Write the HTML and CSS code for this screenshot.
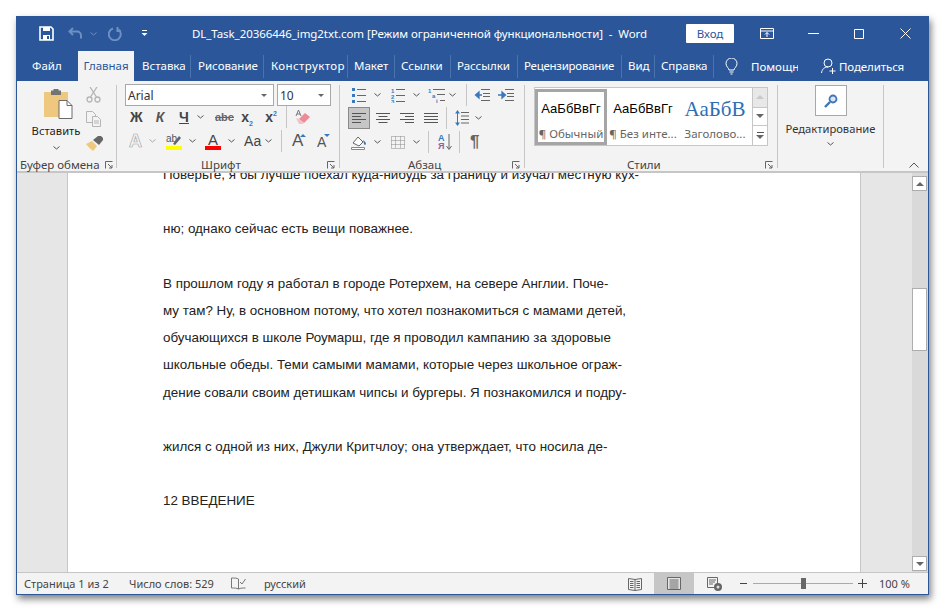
FILE: index.html
```html
<!DOCTYPE html>
<html lang="ru">
<head>
<meta charset="utf-8">
<title>Word</title>
<link rel="stylesheet" href="styles.css">
</head>
<body>
<div class="window">
  <header class="titlebar">
    <svg class="t-save" width="15" height="15" viewBox="0 0 15 15"><path d="M1 1h11l2 2v11H1z" fill="none" stroke="#fff" stroke-width="1.6"/><path d="M4 1h7v4H4zM4 9h7v5H4z" fill="#fff"/><path d="M8 10h2v3H8z" fill="#2b579a"/></svg>
    <svg class="t-undo" width="15" height="13" viewBox="0 0 15 13"><path d="M5 1 1.5 4.5 5 8M2 4.5h7a4 4 0 0 1 4 4v3" fill="none" stroke="#6d8fc1" stroke-width="2"/></svg>
    <svg class="t-caret" width="7" height="4" viewBox="0 0 7 4"><path d="M.5.500 3.500 3l3-2.500" fill="none" stroke="#6d8fc1"/></svg>
    <svg class="t-redo" width="14" height="14" viewBox="0 0 14 14"><path d="M5 1.500a6 6 0 1 0 5.500 1M9.500 0v4H13" fill="none" stroke="#6d8fc1" stroke-width="2"/></svg>
    <svg class="t-qat" width="7" height="7" viewBox="0 0 7 7"><path d="M1 .5h5" stroke="#fff"/><path d="M.5 3h6L3.500 6z" fill="#fff"/></svg>
    <div class="doc-title">DL_Task_20366446_img2txt.com [Режим ограниченной функциональности]&nbsp; -&nbsp; Word</div>
    <div class="signin">Вход</div>
    <svg class="t-ribbon" width="14" height="11" viewBox="0 0 14 11"><path d="M.5.500h13v10H.5zM.5 3h13M7 9V4.500M5 6.500l2-2 2 2" fill="none" stroke="#fff"/></svg>
    <svg class="t-min" width="11" height="1" viewBox="0 0 11 1"><path d="M0 .5h11" stroke="#fff"/></svg>
    <svg class="t-max" width="10" height="10" viewBox="0 0 10 10"><path d="M.5.500h9v9h-9z" fill="none" stroke="#fff"/></svg>
    <svg class="t-close" width="11" height="11" viewBox="0 0 11 11"><path d="M.5.500l10 10M10.500.500l-10 10" stroke="#fff"/></svg>
  </header>

  <nav class="tabs">
    <div class="tab file">Файл</div>
    <div class="tab active">Главная</div>
    <div class="tab tw-ins">Вставка</div><i class="tsep"></i>
    <div class="tab tw-draw">Рисование</div><i class="tsep"></i>
    <div class="tab tw-design">Конструктор</div><i class="tsep"></i>
    <div class="tab tw-layout">Макет</div><i class="tsep"></i>
    <div class="tab tw-refs">Ссылки</div><i class="tsep"></i>
    <div class="tab tw-mail">Рассылки</div><i class="tsep"></i>
    <div class="tab tw-review">Рецензирование</div><i class="tsep"></i>
    <div class="tab tw-view">Вид</div><i class="tsep"></i>
    <div class="tab tw-help">Справка</div><i class="tsep"></i>
    <svg class="bulb" width="13" height="17" viewBox="0 0 13 17"><path d="M4 12c0-2-3-3-3-6.500a5.500 5.500 0 0 1 11 0C12 9 9 10 9 12zM4.500 14h4M5.500 16h2" fill="none" stroke="#fff"/></svg>
    <div class="help">Помощн</div>
    <svg class="person" width="16" height="17" viewBox="0 0 16 17"><circle cx="7" cy="5" r="4" fill="none" stroke="#fff"/><path d="M.5 15c.5-4 3-6 6.500-6M11.500 10v6M8.500 13h6" fill="none" stroke="#fff"/></svg>
    <div class="share">Поделиться</div>
  </nav>

  <section class="ribbon">
    <div class="group g-clip">
      <div class="clip-body">
        <div class="paste">
          <svg width="29" height="30" viewBox="0 0 29 30"><path d="M0 3h24v25H0z" fill="#edc87e"/><path d="M7 1.500h10V6H7z" fill="#737373"/><path d="M9.500 0h5v3h-5z" fill="#737373"/><path d="M15 11.500h8l5 5v13H15z" fill="#fff" stroke="#6b6b6b"/><path d="M23 11.500v5h5" fill="none" stroke="#6b6b6b"/></svg>
          <span class="paste-label">Вставить</span>
          <svg class="chev" width="7" height="4" viewBox="0 0 7 4"><path d="M.5.500 3.500 3l3-2.500" fill="none" stroke="#555"/></svg>
        </div>
        <div class="clip-tools">
          <svg width="15" height="16" viewBox="0 0 15 16"><g fill="none" stroke="#b5b5b5" stroke-width="1.300"><circle cx="3.500" cy="12.500" r="2.500"/><circle cx="11.500" cy="12.500" r="2.500"/><path d="M4.500 10 11 0M10.500 10 4 0"/></g></svg>
          <svg width="16" height="16" viewBox="0 0 16 16"><g fill="#f3f3f3" stroke="#b5b5b5"><path d="M.5.500h6l3 3v8h-9z"/><path d="M6.500 5.500h5l3 3v7h-8z"/><path d="M8 10h5M8 12h5" /></g></svg>
          <svg width="17" height="15" viewBox="0 0 17 15"><path d="M0 8l6-3 5 5-4 5c-2-2-5-4-7-7z" fill="#edc87e"/><path d="M7 4l5-4h3l2 2v2l-4 5z" fill="#666"/></svg>
        </div>
      </div>
      <div class="glabel clip-label"><span>Буфер обмена</span>
        <svg class="launch" width="8" height="8" viewBox="0 0 8 8"><path d="M.5 7.500V.5h7M3 3l4 4M7 4v3H4" fill="none" stroke="#666"/></svg></div>
    </div>

    <div class="group g-font">
      <div class="row r1">
        <div class="combo font-name"><span>Arial</span><b class="drop"></b></div>
        <div class="combo font-size"><span>10</span><b class="drop"></b></div>
      </div>
      <div class="row r2">
        <span class="fmt f-zh">Ж</span>
        <span class="fmt f-k">К</span>
        <span class="fmt f-ch">Ч</span>
        <svg class="chev ml8" width="7" height="4" viewBox="0 0 7 4"><path d="M.5.500 3.500 3l3-2.500" fill="none" stroke="#555"/></svg>
        <span class="fmt f-abc">abc</span>
        <span class="fmt f-sub">x<sub>2</sub></span>
        <span class="fmt f-sup">x<sup>2</sup></span>
        <i class="vsep s-a"></i>
        <svg class="ml8" width="15" height="15" viewBox="0 0 15 15"><path d="M4 9l6-6 5 4-6 6z" fill="#ec8a95"/><path d="M1 8l3 1 5 4-2 1H4z" fill="#f3c0c5"/><path d="M1 6 3.500 0 6 6M2 4h3" fill="none" stroke="#777"/></svg>
      </div>
      <div class="row r3">
        <span class="fmt f-a-out">A</span>
        <svg class="chev c-149" width="7" height="4" viewBox="0 0 7 4"><path d="M.5.500 3.500 3l3-2.500" fill="none" stroke="#aaa"/></svg>
        <svg class="i-high" width="16" height="17" viewBox="0 0 16 17"><text x="0" y="9" font-size="10" font-family="Liberation Sans" fill="#555">ab</text><path d="M7 11l6-8 2 2-6 7z" fill="#666"/><path d="M0 13h16v4H0z" fill="#ffff00"/></svg>
        <svg class="chev ml7" width="7" height="4" viewBox="0 0 7 4"><path d="M.5.500 3.500 3l3-2.500" fill="none" stroke="#555"/></svg>
        <span class="fcol">A</span>
        <svg class="chev c-228" width="7" height="4" viewBox="0 0 7 4"><path d="M.5.500 3.500 3l3-2.500" fill="none" stroke="#555"/></svg>
        <span class="fmt f-aa">Аа</span>
        <svg class="chev ml6" width="7" height="4" viewBox="0 0 7 4"><path d="M.5.500 3.500 3l3-2.500" fill="none" stroke="#555"/></svg>
        <i class="vsep s-b"></i>
        <span class="grow g1">A<b class="tri up"></b></span>
        <span class="grow g2">A<b class="tri down"></b></span>
      </div>
      <div class="glabel"><span class="center-label font-lbl">Шрифт</span>
        <svg class="launch" width="8" height="8" viewBox="0 0 8 8"><path d="M.5 7.500V.5h7M3 3l4 4M7 4v3H4" fill="none" stroke="#666"/></svg></div>
    </div>

    <div class="group g-para">
      <div class="row r1 pr1">
        <svg class="ml4" width="14" height="15" viewBox="0 0 14 15"><path d="M0 0h3v3H0zM0 6h3v3H0zM0 12h3v3H0z" fill="#3a78bd"/><path d="M5 1.500h9M5 7.500h9M5 13.500h9" stroke="#666"/></svg>
        <svg class="chev m8-7" width="7" height="4" viewBox="0 0 7 4"><path d="M.5.500 3.500 3l3-2.500" fill="none" stroke="#555"/></svg>
        <svg class="m10" width="14" height="15" viewBox="0 0 14 15"><g fill="#3a78bd" font-size="6" font-family="Liberation Sans" font-weight="700"><text x="0" y="5">1</text><text x="0" y="10.500">2</text><text x="0" y="15.500">3</text></g><path d="M5 1.500h9M5 7.500h9M5 13.500h9" stroke="#666"/></svg>
        <svg class="chev m8-7" width="7" height="4" viewBox="0 0 7 4"><path d="M.5.500 3.500 3l3-2.500" fill="none" stroke="#555"/></svg>
        <svg class="m8" width="17" height="15" viewBox="0 0 17 15"><g fill="#3a78bd" font-size="6" font-family="Liberation Sans" font-weight="700"><text x="0" y="5">1</text><text x="4" y="10">a</text><text x="8" y="15">i</text></g><path d="M5 1.500h12M9 6.500h8M12 12.500h5" stroke="#666"/></svg>
        <svg class="chev m4" width="7" height="4" viewBox="0 0 7 4"><path d="M.5.500 3.500 3l3-2.500" fill="none" stroke="#555"/></svg>
        <i class="vsep s-c"></i>
        <svg class="m7" width="16" height="12" viewBox="0 0 16 12"><path d="M7 .5h9M9 4.500h7M9 7.500h7M7 11.500h9" stroke="#666"/><path d="M8 6H3M5 3 1.500 6 5 9z" fill="#3a78bd" stroke="#3a78bd" stroke-width="1.300"/></svg>
        <svg class="m8" width="16" height="12" viewBox="0 0 16 12"><path d="M7 .5h9M9 4.500h7M9 7.500h7M7 11.500h9" stroke="#666"/><path d="M0 6h5M4 3 7.500 6 4 9z" fill="#3a78bd" stroke="#3a78bd" stroke-width="1.300"/></svg>
      </div>
      <div class="row pr2">
        <span class="align-on"><svg width="14" height="10" viewBox="0 0 14 10"><path d="M0 .5h14M0 3.500h9M0 6.500h14M0 9.500h9" stroke="#555"/></svg></span>
        <svg class="m6" width="14" height="10" viewBox="0 0 14 10"><path d="M0 .5h14M2.500 3.500h9M0 6.500h14M2.500 9.500h9" stroke="#555"/></svg>
        <svg class="m10" width="14" height="10" viewBox="0 0 14 10"><path d="M0 .5h14M5 3.500h9M0 6.500h14M5 9.500h9" stroke="#555"/></svg>
        <svg class="m10" width="14" height="10" viewBox="0 0 14 10"><path d="M0 .5h14M0 3.500h14M0 6.500h14M0 9.500h14" stroke="#555"/></svg>
        <i class="vsep s-d"></i>
        <svg class="m8" width="14" height="16" viewBox="0 0 14 16"><path d="M2.500 1v14" stroke="#3a78bd"/><path d="M2.500 0 5 3.500H0zM2.500 16 5 12.500H0z" fill="#3a78bd"/><path d="M6 2.500h8M6 6h8M6 9.500h8M6 13h8" stroke="#666"/></svg>
        <svg class="chev m6" width="7" height="4" viewBox="0 0 7 4"><path d="M.5.500 3.500 3l3-2.500" fill="none" stroke="#555"/></svg>
      </div>
      <div class="row r3 pr3">
        <svg class="m3" width="16" height="16" viewBox="0 0 16 16"><path d="M2 9l5-6 5 5-4 4z" fill="#fff" stroke="#666"/><path d="M12 6c2 1 3 3 3 4s-2 1-2 0z" fill="#3a78bd"/><path d="M.5 13.500h13v2H.5z" fill="#fff" stroke="#888"/></svg>
        <svg class="chev m7" width="7" height="4" viewBox="0 0 7 4"><path d="M.5.500 3.500 3l3-2.500" fill="none" stroke="#555"/></svg>
        <svg class="m10" width="14" height="13" viewBox="0 0 14 13"><path d="M.5.500h13v12H.5zM.5 4.500h13M.5 8.500h13M4.500.5v12M9.500.5v12" fill="none" stroke="#888" stroke-dasharray="1 1"/></svg>
        <svg class="chev m8-7" width="7" height="4" viewBox="0 0 7 4"><path d="M.5.500 3.500 3l3-2.500" fill="none" stroke="#555"/></svg>
        <i class="vsep s-e"></i>
        <span class="sort m9"><span class="sort-a">А</span><span class="sort-z">Я</span><svg width="6" height="16" viewBox="0 0 6 16"><path d="M3 0v15M.5 12 3 15.500 5.500 12" fill="none" stroke="#666"/></svg></span>
        <i class="vsep s-f"></i>
        <span class="pil">¶</span>
      </div>
      <div class="glabel"><span class="center-label para-lbl">Абзац</span>
        <svg class="launch" width="8" height="8" viewBox="0 0 8 8"><path d="M.5 7.500V.5h7M3 3l4 4M7 4v3H4" fill="none" stroke="#666"/></svg></div>
    </div>

    <div class="group g-styles">
      <div class="gallery">
        <div class="style sel"><span class="s-prev">АаБбВвГг</span><span class="s-name">¶ Обычный</span></div>
        <div class="style"><span class="s-prev">АаБбВвГг</span><span class="s-name">¶ Без инте...</span></div>
        <div class="style"><span class="s-prev big">АаБбВ</span><span class="s-name">Заголово...</span></div>
        <div class="g-scroll">
          <div class="gs off"><b class="arr-up"></b></div>
          <div class="gs"><b class="arr-dn"></b></div>
          <div class="gs more"><b class="arr-dn"></b></div>
        </div>
      </div>
      <div class="glabel"><span class="center-label styles-lbl">Стили</span>
        <svg class="launch" width="8" height="8" viewBox="0 0 8 8"><path d="M.5 7.500V.5h7M3 3l4 4M7 4v3H4" fill="none" stroke="#666"/></svg></div>
    </div>

    <div class="group g-edit">
      <div class="find"><svg width="14" height="14" viewBox="0 0 14 14"><circle cx="9" cy="5" r="3.500" fill="#dbe6f2" stroke="#3f75b3" stroke-width="1.800"/><path d="M6 8 1 13" stroke="#3f75b3" stroke-width="2.400"/></svg></div>
      <span class="edit-label">Редактирование</span>
      <svg class="chev" width="7" height="4" viewBox="0 0 7 4"><path d="M.5.500 3.500 3l3-2.500" fill="none" stroke="#555"/></svg>
    </div>
    <div class="collapse"><svg width="10" height="6" viewBox="0 0 10 6"><path d="M.5 5.500 5 1l4.500 4.500" fill="none" stroke="#555"/></svg></div>
  </section>

  <main class="workspace">
    <div class="gutter left"></div>
    <article class="page">
      <div class="text">
        <p>Поверьте, я бы лучше поехал куда-нибудь за границу и изучал местную кух-</p>
        <p>ню; однако сейчас есть вещи поважнее.</p>
        <p>В прошлом году я работал в городе Ротерхем, на севере Англии. Поче-<br>му там? Ну, в основном потому, что хотел познакомиться с мамами детей,<br>обучающихся в школе Роумарш, где я проводил кампанию за здоровые<br>школьные обеды. Теми самыми мамами, которые через школьное ограж-<br>дение совали своим детишкам чипсы и бургеры. Я познакомился и подру-</p>
        <p>жился с одной из них, Джули Критчлоу; она утверждает, что носила де-</p>
        <p>12 ВВЕДЕНИЕ</p>
      </div>
    </article>
    <div class="gutter right"></div>
    <div class="vscroll">
      <div class="sb-btn"><b class="arr-up dark"></b></div>
      <div class="sb-thumb"></div>
      <div class="sb-btn end"><b class="arr-dn dark"></b></div>
    </div>
  </main>

  <footer class="status">
    <span class="st-page">Страница 1 из 2</span>
    <span class="st-words">Число слов: 529</span>
    <svg class="st-proof" width="15" height="14" viewBox="0 0 15 14"><path d="M7.500 2C6 1 3 1 .5 1v10c3 0 5 0 7 1 2-1 4-1 7-1" fill="none" stroke="#777"/><path d="M7.500 2v10M9 5l2 2 3.500-5" fill="none" stroke="#777"/></svg>
    <span class="st-lang">русский</span>
    <svg class="st-read" width="14" height="14" viewBox="0 0 14 14"><path d="M.5 1.500l6.500 1 6.500-1v11l-6.500 1-6.500-1zM7 2.500v11" fill="none" stroke="#666"/><path d="M2 4.500h3.500M2 6.500h3.500M2 8.500h3.500M2 10.500h3.500M8.500 4.500H12M8.500 6.500H12M8.500 8.500H12M8.500 10.500H12" stroke="#666"/></svg>
    <span class="st-print"><svg width="14" height="13" viewBox="0 0 14 13"><path d="M.5.500h13v12H.5z" fill="#e4e4e4" stroke="#666"/><path d="M2.500 3h9M2.500 5h9M2.500 7h9M2.500 9h9M2.500 11h9" stroke="#666"/></svg></span>
    <svg class="st-web" width="15" height="14" viewBox="0 0 15 14"><path d="M.5.500h10v10H.5z" fill="none" stroke="#666"/><path d="M2 3h7M2 5h6M2 7h4" stroke="#666"/><circle cx="11" cy="10" r="4" fill="#666"/><circle cx="11" cy="10" r="1.500" fill="#ddd"/></svg>
    <span class="st-minus"></span>
    <div class="slider"><span class="knob"></span></div>
    <span class="st-plus"></span>
    <span class="st-zoom">100 %</span>
  </footer>
</div>
</body>
</html>
```
FILE: styles.css
```css
* { box-sizing: border-box; }
html, body { margin: 0; height: 100%; background: #fff; overflow: hidden; }
body { padding: 16px 16px 16px 16px; font-family: "Noto Sans", "Open Sans", sans-serif; }
.window { width: 913px; height: 579px; display: flex; flex-direction: column; border: 1px solid #2b579a; border-top: 0; box-shadow: 2px 4px 7px rgba(0,0,0,.5); background: #f3f3f3; }
svg { flex: none; display: block; }
i, b { display: block; flex: none; }

/* title */
.titlebar { height: 35px; background: #2b579a; display: flex; align-items: center; color: #fff; flex: none; }
.t-save { margin-left: 22px; }
.t-undo { margin-left: 14px; }
.t-caret { margin-left: 7px; }
.t-redo { margin-left: 11px; }
.t-qat { margin-left: 19px; }
.doc-title { margin-left: 44px; width: 494px; font-size: 11.500px; letter-spacing: -.07px; white-space: nowrap; }
.signin { width: 48px; height: 19px; background: #fff; color: #2b579a; font-size: 11.500px; line-height: 20px; text-align: center; border-radius: 1px; }
.t-ribbon { margin-left: 26px; }
.t-min { margin-left: 34px; }
.t-max { margin-left: 35px; }
.t-close { margin-left: 36px; }

/* tabs */
.tabs { height: 30px; background: #2b579a; display: flex; align-items: center; color: #fff; flex: none; font-size: 11.500px; }
.tab { height: 30px; line-height: 30px; padding: 0 0 0 6px; white-space: nowrap; flex: none; }
.tab.file { width: 61px; padding: 0 0 0 15px; }
.tab.active { width: 56px; margin-right: 1px; padding: 0; text-align: center; background: #f3f3f3; color: #2b579a; }
.tw-ins { width: 55px; padding-left: 7px; }
.tw-draw { width: 72px; padding-left: 7px; }
.tw-design { width: 83px; padding-left: 7px; letter-spacing: .4px; }
.tw-layout { width: 46px; }
.tw-refs { width: 55px; }
.tw-mail { width: 66px; }
.tw-review { width: 103px; letter-spacing: -.25px; }
.tw-view { width: 32px; }
.tw-help { width: 58px; }
.tsep { width: 1px; height: 23px; background: #4a72ad; }
.bulb { margin-left: 11px; }
.help { width: 47px; margin-left: 13px; overflow: hidden; white-space: nowrap; }
.person { margin-left: 23px; }
.share { margin-left: 2px; white-space: nowrap; letter-spacing: -.1px; }

/* ribbon */
.ribbon { height: 92px; flex: none; display: flex; padding-top: 4px; background: #f3f3f3; border-bottom: 2px solid #c6c6c6; font-size: 11.500px; color: #333; }
.group { height: 83px; border-right: 1px solid #c6c6c6; display: flex; flex-direction: column; flex: none; position: relative; }
.glabel { margin-top: auto; margin-bottom: -4px; height: 14px; line-height: 14px; display: flex; align-items: center; font-size: 11.500px; color: #444; white-space: nowrap; }
.launch { margin-left: auto; margin-right: 4px; }
.center-label { margin-left: 0; }
.row { display: flex; align-items: center; flex: none; }
.ml4 { margin-left: 4px; } .ml6 { margin-left: 6px; } .ml7 { margin-left: 7px; } .ml8 { margin-left: 8px; }
.m3 { margin-left: 3px; } .m4 { margin-left: 4px; } .m6 { margin-left: 6px; } .m7 { margin-left: 7px; } .m8 { margin-left: 8px; } .m9 { margin-left: 9px; } .m10 { margin-left: 10px; }
.m8-7 { margin-left: 8px; }
.chev { flex: none; }
.vsep { width: 1px; height: 22px; background: #c6c6c6; }

/* clipboard */
.g-clip { width: 100px; }
.clip-body { display: flex; height: 68px; margin-top: 0; }
.paste { margin-left: 15px; width: 48px; display: flex; flex-direction: column; align-items: center; color: #222; }
.paste svg:first-child { margin-top: 4px; margin-left: 5px; }
.paste-label { font-size: 11.200px; line-height: 16px; margin-top: 4px; white-space: nowrap; }
.paste .chev { margin-top: 7px; }
.clip-tools { margin-left: 6px; display: flex; flex-direction: column; gap: 8px; padding-top: 2px; }
.clip-tools svg:nth-child(3) { margin-top: 1px; }
.clip-label { padding-left: 3px; }
.clip-label .launch { margin-right: 3px; }

/* font */
.g-font { width: 223px; padding-left: 8px; margin-left: 0; }
.r1 { height: 22px; margin-top: -1px; }
.combo { height: 22px; background: #fff; border: 1px solid #a8a8a8; display: flex; align-items: center; font-family: "Noto Sans", sans-serif; font-size: 12px; color: #333; padding-left: 2px; }
.font-name { width: 149px; }
.font-size { width: 54px; margin-left: 3px; }
.drop { margin-left: auto; margin-right: 6px; border: 3px solid transparent; border-top: 3px solid #666; border-bottom: 0; }
.r2 { height: 22px; }
.r3 { height: 24px; margin-top: 1px; }
.fmt { display: block; flex: none; text-align: center; font-family: "Liberation Sans", sans-serif; color: #444; line-height: 14px; }
.f-zh { width: 12px; margin-left: 5px; font-weight: 700; font-size: 14px; }
.f-k { width: 10px; margin-left: 13px; font-weight: 700; font-style: italic; font-size: 14px; color: #555; }
.f-ch { width: 10px; margin-left: 14px; font-weight: 700; font-size: 14px; text-decoration: underline; }
.f-abc { width: 16px; margin-left: 11px; font-size: 11px; font-weight: 700; text-decoration: line-through; color: #666; }
.f-sub { width: 12px; margin-left: 10px; font-size: 14px; font-weight: 700; }
.f-sup { width: 12px; margin-left: 12px; font-size: 14px; font-weight: 700; }
.f-sub sub, .f-sup sup { font-size: 7px; line-height: 0; color: #3a78bd; }
.s-a { margin-left: 9px; }
.f-a-out { width: 13px; margin-left: 4px; font-size: 18px; line-height: 18px; font-weight: 700; color: #f6f6f6; -webkit-text-stroke: .7px #a8a8a8; }
.c-149 { margin-left: 7px; }
.i-high { margin-left: 10px; }
.fcol { width: 16px; margin-left: 9px; height: 17px; font-family: "Liberation Sans", sans-serif; font-size: 15px; line-height: 13px; text-align: center; color: #444; border-bottom: 4px solid #f00; }
.c-228 { margin-left: 7px; }
.f-aa { width: 15px; margin-left: 9px; font-size: 14px; }
.s-b { margin-left: 9px; }
.grow { display: flex; align-items: flex-start; font-family: "Liberation Sans", sans-serif; color: #555; line-height: 16px; }
.g1 { margin-left: 10px; font-size: 17px; width: 15px; }
.g2 { margin-left: 10px; font-size: 14px; width: 14px; padding-top: 2px; }
.tri { margin-left: -3px; border: 3px solid transparent; }
.tri.up { border-top: 0; border-bottom: 3px solid #3a78bd; margin-top: 1px; }
.tri.down { border-bottom: 0; border-top: 3px solid #3a78bd; margin-top: 0; margin-left: -2px; }
.font-lbl { margin-left: 76px; }

/* paragraph */
.g-para { width: 185px; padding-left: 8px; }
.pr1 { height: 22px; }
.pr2 { height: 22px; margin-top: 1px; }
.pr3 { margin-top: 1px; height: 24px; }
.s-c { margin-left: 10px; }
.s-d { margin-left: 8px; }
.s-e { margin-left: 8px; }
.s-f { margin-left: 7px; }
.align-on { width: 22px; height: 22px; background: #c6c6c6; border: 1px solid #8a8a8a; display: flex; align-items: center; justify-content: center; flex: none; }
.sort { width: 14px; display: grid; grid-template-columns: 8px 6px; grid-template-rows: 8px 8px; font: 700 9px/8px "Liberation Sans", sans-serif; flex: none; }
.sort-a { color: #3a78bd; }
.sort-z { color: #8e5ea8; grid-row: 2; }
.sort svg { grid-column: 2; grid-row: 1 / 3; }
.pil { margin-left: 10px; width: 10px; font: 700 17px/18px "Liberation Sans", sans-serif; color: #666; }
.para-lbl { margin-left: 60px; }

/* styles */
.g-styles { width: 253px; padding-left: 9px; }
.gallery { width: 234px; height: 59px; margin-top: 2px; background: #fff; border: 1px solid #c6c6c6; display: flex; }
.style { width: 72px; display: flex; flex-direction: column; align-items: center; padding-top: 9px; flex: none; }
.style.sel { border: 3px solid #a5a5a5; margin: 1px 0 0 0; height: 56px; padding-top: 5px; }
.s-prev { height: 29px; font: 13px/24px "Liberation Sans", sans-serif; color: #000; white-space: nowrap; }
.s-prev.big { font: 21px/24px "Liberation Serif", serif; color: #2f6eb5; }
.s-name { font-size: 11.500px; line-height: 16px; color: #666; white-space: nowrap; }
.g-scroll { margin-left: auto; width: 15px; display: flex; flex-direction: column; border-left: 1px solid #c6c6c6; }
.gs { height: 19px; display: flex; align-items: center; justify-content: center; flex-direction: column; border-bottom: 1px solid #c6c6c6; }
.gs:first-child { height: 20px; }
.gs:last-child { border-bottom: 0; }
.gs.off { background: #e8e8e8; }
.more::before { content: ""; display: block; width: 7px; height: 1px; background: #555; margin-bottom: 2px; }
.arr-up { border: 4px solid transparent; border-top: 0; border-bottom: 4px solid #c9c9c9; }
.arr-dn { border: 4px solid transparent; border-bottom: 0; border-top: 4px solid #666; }
.arr-up.dark { border-bottom-color: #666; }
.styles-lbl { margin-left: 93px; }

/* editing */
.g-edit { width: 106px; align-items: center; }
.find { width: 32px; height: 31px; margin-top: 0; border: 1px solid #a8a8a8; background: #fff; display: flex; align-items: center; justify-content: center; }
.edit-label { margin-top: 5px; font-size: 11.200px; line-height: 16px; color: #333; white-space: nowrap; }
.g-edit .chev { margin-top: 5px; }
.collapse { flex: 1; display: flex; justify-content: flex-end; align-items: flex-end; padding: 0 9px 0 0; height: 83px; }

/* doc */
.workspace { flex: 1; min-height: 0; display: flex; background: #e6e6e6; overflow: hidden; }
.gutter.left { width: 51px; flex: none; border-right: 1px solid #c6c6c6; }
.page { width: 792px; flex: none; background: #fff; padding-left: 95px; overflow: hidden; }
.text { margin-top: -12px; font: 13.400px/27.200px "Liberation Sans", Arial, sans-serif; color: #222; }
.text p { margin: 0 0 27.200px; white-space: nowrap; }
.gutter.right { width: 52px; flex: none; border-left: 1px solid #c6c6c6; }
.vscroll { width: 16px; flex: none; background: #d9d9d9; display: flex; flex-direction: column; padding: 3px 1px 1px 0; }
.sb-btn { height: 15px; background: #fff; border: 1px solid #adadad; display: flex; align-items: center; justify-content: center; flex: none; }
.sb-btn.end { margin-top: auto; }
.sb-thumb { height: 63px; background: #fff; border: 1px solid #adadad; margin-top: 97px; flex: none; }

/* status */
.status { height: 22px; flex: none; background: #f3f3f3; border-top: 1px solid #c6c6c6; display: flex; align-items: center; font-size: 11px; color: #444; }
.st-page { margin-left: 7px; width: 85px; white-space: nowrap; }
.st-words { margin-left: 20px; width: 83px; white-space: nowrap; }
.st-proof { margin-left: 19px; }
.st-lang { margin-left: 18px; width: 42px; white-space: nowrap; }
.st-read { margin-left: 322px; }
.st-print { margin-left: 12px; width: 40px; height: 21px; background: #c6c6c6; display: flex; align-items: center; justify-content: center; flex: none; }
.st-web { margin-left: 13px; }
.st-minus { width: 7px; height: 1px; background: #444; margin-left: 18px; flex: none; }
.slider { width: 100px; height: 1px; background: #aaa; margin-left: 6px; display: flex; align-items: center; flex: none; }
.knob { width: 5px; height: 11px; background: #666; margin-left: 48px; flex: none; }
.st-plus { width: 9px; height: 9px; margin-left: 5px; flex: none; background: linear-gradient(#444,#444) center/9px 1px no-repeat, linear-gradient(#444,#444) center/1px 9px no-repeat; }
.st-zoom { margin-left: 12px; white-space: nowrap; }
```
